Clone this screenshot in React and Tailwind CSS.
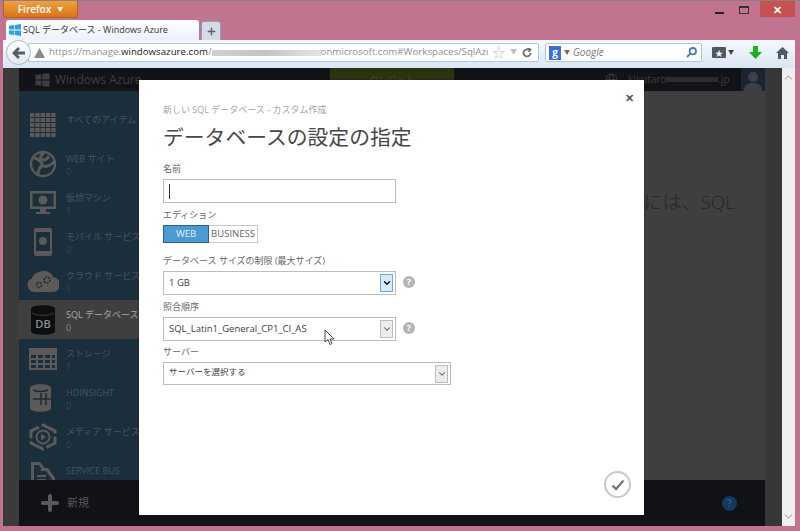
import { ChevronDown, ChevronUp, Plus } from "lucide-react";

const font = { fontFamily: '"Open Sans", "Noto Sans CJK JP", sans-serif' };

function GridIcon() {
  return (
    <svg width="26" height="24" viewBox="0 0 26 24" fill="#5c5a58">
      {[0, 5.3, 10.6, 15.9, 21.2].map((x) =>
        [0, 5, 10, 15, 20].map((y) => <rect key={x + "-" + y} x={x} y={y} width="4.4" height="4" />)
      )}
    </svg>
  );
}

function GlobeIcon() {
  return (
    <svg width="28" height="28" viewBox="0 0 28 28" fill="none" stroke="#5c5a58">
      <circle cx="14" cy="14" r="12" strokeWidth="2.4" />
      <path d="M5 8c5 1 7 3 8 6s4 3 8 1 4-4 4-4M9 24c0-5 3-8 5-10M15 3c-3 2-4 4-3 6s6 1 8-3" strokeWidth="3" />
    </svg>
  );
}

function MonitorIcon() {
  return (
    <svg width="26" height="24" viewBox="0 0 26 24" fill="#5c5a58">
      <path d="M0 0h26v18H0zM2.5 2.5v13h21v-13z" fillRule="evenodd" />
      <circle cx="13" cy="9" r="4.5" />
      <path d="M10 18h6v3h4v2H6v-2h4z" />
    </svg>
  );
}

function PhoneIcon() {
  return (
    <svg width="18" height="28" viewBox="0 0 18 28" fill="#5c5a58">
      <path d="M2 0h14a2 2 0 0 1 2 2v24a2 2 0 0 1-2 2H2a2 2 0 0 1-2-2V2a2 2 0 0 1 2-2zM2 4v19h14V4z" fillRule="evenodd" />
      <circle cx="9" cy="13" r="4" />
    </svg>
  );
}

function CloudIcon() {
  return (
    <svg width="32" height="24" viewBox="0 0 32 24" fill="#5c5a58">
      <path d="M7 23a7 7 0 0 1-2-13.500A8 8 0 0 1 13 3a9 9 0 0 1 13 5 7.500 7.500 0 0 1-1 15z" />
      <circle cx="12" cy="16" r="2.500" fill="none" stroke="#1b2e3c" strokeWidth="1.500" strokeDasharray="2 1" />
      <circle cx="20" cy="11" r="3" fill="none" stroke="#1b2e3c" strokeWidth="1.500" strokeDasharray="2 1" />
    </svg>
  );
}

function DbIcon() {
  return (
    <svg width="24" height="30" viewBox="0 0 24 30">
      <path d="M0 4c0-5 24-5 24 0v22c0 5-24 5-24 0z" fill="#0c0d0f" />
      <path d="M1 8c4 3 18 3 22 0" stroke="#3f3f3f" fill="none" />
      <text x="12" y="23" textAnchor="middle" fontSize="11" fontWeight="600" fill="#8d8d8d" style={font}>DB</text>
    </svg>
  );
}

function TableIcon() {
  return (
    <svg width="28" height="22" viewBox="0 0 28 22" fill="#5c5a58">
      <path d="M0 0h28v22H0zM2 7v3h5V7zm7 0v3h5V7zm7 0v3h5V7zm7 0v3h3V7zM2 12v3h5v-3zm7 0v3h5v-3zm7 0v3h5v-3zm7 0v3h3v-3zM2 17v3h5v-3zm7 0v3h5v-3zm7 0v3h5v-3zm7 0v3h3v-3z" fillRule="evenodd" />
    </svg>
  );
}

function HdIcon() {
  return (
    <svg width="26" height="28" viewBox="0 0 26 28" fill="#5c5a58">
      <path d="M0 4c0-5 21-5 21 0v20c0 5-21 5-21 0z" />
      <path d="M3 15h22M11 9v12M16 9v12M3 6c4 2 11 2 15 0" stroke="#1b2e3c" strokeWidth="1.600" fill="none" />
    </svg>
  );
}

function MediaIcon() {
  return (
    <svg width="28" height="28" viewBox="0 0 28 28" fill="none" stroke="#5c5a58">
      <path d="M14 2 26 8v12l-12 6L2 20V8z" strokeWidth="3" strokeDasharray="16 3" />
      <circle cx="14" cy="14" r="6.500" strokeWidth="2" />
      <path d="M12 10.500v7l5-3.500z" fill="#5c5a58" stroke="none" />
    </svg>
  );
}

function BusIcon() {
  return (
    <svg width="24" height="28" viewBox="0 0 24 28" fill="#5c5a58">
      <path d="M0 0h9l5 6h3l7 10v12H0zM3 3v22h18V17l-6-8H10V6L8 3z" fillRule="evenodd" />
      <path d="M6 13h9v2H6zM6 17h9v2H6z" />
    </svg>
  );
}

const navItems = [
  { label: "すべてのアイテム", icon: <GridIcon /> },
  { label: "WEB サイト", count: "0", icon: <GlobeIcon /> },
  { label: "仮想マシン", count: "1", icon: <MonitorIcon /> },
  { label: "モバイル サービス", count: "0", icon: <PhoneIcon /> },
  { label: "クラウド サービス", count: "1", icon: <CloudIcon /> },
  { label: "SQL データベース", count: "0", icon: <DbIcon />, active: true },
  { label: "ストレージ", count: "1", icon: <TableIcon /> },
  { label: "HDINSIGHT", count: "0", icon: <HdIcon /> },
  { label: "メディア サービス", count: "0", icon: <MediaIcon /> },
  { label: "SERVICE BUS", icon: <BusIcon /> },
];

function NavItem({ item }) {
  return (
    <div className={"flex h-[39px] shrink-0 items-center overflow-hidden " + (item.active ? "bg-[#3f3f3f]" : "")}>
      <div className="flex w-[47px] shrink-0 justify-center">{item.icon}</div>
      <div className="whitespace-nowrap pt-[2px] text-[9px] leading-[13px]">
        <div className={item.active ? "text-[#a9a9a9]" : "text-[#47545f]"}>{item.label}</div>
        <div className={item.active ? "text-[#8a8a8a]" : "text-[#34495a]"}>{item.count || "\u00a0"}</div>
      </div>
    </div>
  );
}

function Label({ children }) {
  return <div className="text-[9px] leading-[14px] text-[#666]">{children}</div>;
}

function Help() {
  return (
    <div className="mb-[2px] flex h-[12px] w-[12px] items-center justify-center rounded-full bg-[#b5b5b5] text-[9px] font-bold text-white">?</div>
  );
}

function Select({ value, width, active, small }) {
  return (
    <div className={"flex items-center justify-between border border-[#bdbdbd] bg-white pl-[5px] pr-[2px] " + width + " " + (small ? "h-[23px]" : "h-[24px]")}>
      <span className={"text-[#3c3c3c] " + (small ? "pb-[3px] text-[8.500px]" : "text-[9.500px]")}>{value}</span>
      <span className={"flex h-[18px] w-[13px] items-center justify-center border " + (active ? "border-[#6fa8d6] bg-[#d8ebfa]" : "border-[#bdbdbd] bg-[#ececec]")}>
        <ChevronDown size={10} strokeWidth={active ? 3.5 : 2.5} color={active ? "#111" : "#555"} />
      </span>
    </div>
  );
}

function Modal() {
  return (
    <div className="absolute left-[139px] top-[80px] flex h-[435px] w-[505px] flex-col bg-white pl-[24px] shadow-[0_0_2px_rgba(0,0,0,0.4)]">
      <span className="absolute right-[10px] top-[11px] text-[11px] font-bold leading-[13px] text-[#555]">✕</span>
      <div className="mt-[24px] text-[9px] leading-[12px] text-[#a5a5a5]">新しい SQL データベース - カスタム作成</div>
      <h1 className="mt-[7px] text-[20.800px] leading-[29px] text-[#474747]">データベースの設定の指定</h1>
      <div className="mt-[10px]"><Label>名前</Label></div>
      <div className="mt-[3px] flex h-[24px] w-[233px] items-center border border-[#bdbdbd] pl-[5px]">
        <div className="h-[15px] w-px bg-[#333]" />
      </div>
      <div className="mt-[5px]"><Label>エディション</Label></div>
      <div className="mt-[3px] flex h-[18px] w-[95px] text-[9.500px]">
        <div className="flex w-[46px] items-center justify-center border border-[#2d5f86] bg-[#4a9ad4] text-[#e8f2f9]">WEB</div>
        <div className="flex flex-1 items-center justify-center border border-l-0 border-[#c9c9c9] text-[#666]">BUSINESS</div>
      </div>
      <div className="mt-[11px]"><Label>データベース サイズの制限 (最大サイズ)</Label></div>
      <div className="mt-[3px] flex items-center gap-[7px]">
        <Select value="1 GB" width="w-[233px]" active />
        <Help />
      </div>
      <div className="mt-[5px]"><Label>照合順序</Label></div>
      <div className="mt-[3px] flex items-center gap-[7px]">
        <Select value="SQL_Latin1_General_CP1_CI_AS" width="w-[233px]" />
        <Help />
      </div>
      <div className="mt-[4px]"><Label>サーバー</Label></div>
      <div className="mt-[3px]">
        <Select value="サーバーを選択する" width="w-[288px]" small />
      </div>
      <div className="mt-auto mb-[17px] mr-[13px] flex justify-end">
        <div className="flex h-[27px] w-[27px] items-center justify-center rounded-full border-2 border-[#c8c8c8]">
          <svg width="14" height="12" viewBox="0 0 14 12" fill="none" stroke="#777" strokeWidth="2.400">
            <path d="M1.500 6.500 5 10l7.500-8.500" />
          </svg>
        </div>
      </div>
      {/* mouse pointer over the collation select */}
      <svg className="absolute left-[185px] top-[249px]" width="11" height="17" viewBox="0 0 11 17" fill="white" stroke="#333" strokeWidth="0.900">
        <path d="M1 1v12l3-2.500 2 5 2-1-2-4.500h4z" />
      </svg>
    </div>
  );
}

function BrowserChrome() {
  return (
    <>
      {/* title row */}
      <div className="flex h-[20px] shrink-0 items-start border-t border-[#8f7f85] pl-[3px] pr-[5px]">
        <div className="flex h-[17px] w-[75px] items-center justify-center gap-[6px] rounded-b-[3px] border border-t-0 border-[#b5651a] bg-gradient-to-b from-[#f0a03c] to-[#d9741c] text-[10px] font-semibold text-white">
          Firefox <span className="text-[6px]">▼</span>
        </div>
        <div className="ml-auto flex items-start">
          <div className="mr-[15px] mt-[11px] h-[2px] w-[9px] bg-[#222]" />
          <div className="mr-[11px] mt-[5px] h-[8px] w-[10px] border border-t-2 border-[#333]" />
          <div className="flex h-[16px] w-[35px] items-center justify-center bg-[#c75050] text-[11px] font-bold leading-none text-white">✕</div>
        </div>
      </div>
      {/* tab row */}
      <div className="flex h-[20px] shrink-0 items-end pl-[6px]">
        <div className="flex h-[20px] w-[193px] items-center gap-[2px] rounded-t-[3px] bg-gradient-to-b from-white to-[#eaf2fa] pl-[3px] text-[9px] text-[#333]">
          <svg width="12" height="12" viewBox="0 0 12 12" fill="#2aa3e0"><path d="M0 1.800 5 1v4.600H0zM5.700.9 12 0v5.600H5.700zM0 6.400h5V11l-5-.8zM5.700 6.400H12V12l-6.300-.9z" /></svg>
          SQL データベース - Windows Azure
        </div>
        <div className="ml-[2px] flex h-[19px] w-[20px] items-center justify-center rounded-t-[3px] border border-b-0 border-[#8fa0b5] bg-[#d3dbe6]">
          <Plus size={11} strokeWidth={3} color="#55606c" />
        </div>
      </div>
      {/* nav toolbar */}
      <div className="ml-[3px] mr-[5px] flex h-[28px] shrink-0 items-center bg-gradient-to-b from-[#f5f9fd] to-[#d9e6f3] pb-[3px] pr-[6px]">
        <div className="z-10 flex h-[25px] w-[25px] shrink-0 translate-x-[3px] items-center justify-center rounded-full border border-[#a9bacb] bg-gradient-to-b from-white to-[#e3eaf2]">
          <svg width="13" height="12" viewBox="0 0 13 12" fill="#55606c"><path d="M6 0 8 2 5.500 4.500H13v3H5.500L8 10l-2 2-6-6z" /></svg>
        </div>
        <div className="flex h-[19px] w-[511px] shrink-0 items-center overflow-hidden whitespace-nowrap rounded-r-[2px] border border-[#b4c6d9] bg-white pl-[5px] pr-[6px] text-[9.700px]">
          <svg className="shrink-0" width="11" height="10" viewBox="0 0 11 10" fill="#8a8a8a"><path d="M5.500 0 11 10H0z" /></svg>
          <span className="ml-[4px] text-[#8a8f95]">https://manage.</span>
          <span className="text-[#222]">windowsazure.com</span>
          <span className="text-[#8a8f95]">/</span>
          <span className="h-[6px] w-[109px] shrink-0 bg-gradient-to-r from-[#d0d0d0] via-[#c4c4c4] to-[#e4e4e4]" />
          <span className="text-[#8a8f95]">onmicrosoft.com#Workspaces/SqlAzı</span>
          <div className="ml-auto flex shrink-0 items-center gap-[5px] text-[#b9bfc5]">
            <span className="text-[13px] leading-none">☆</span>
            <span className="text-[7px]">▼</span>
            <svg width="10" height="10" viewBox="0 0 10 10" fill="none" stroke="#66707a" strokeWidth="1.800"><path d="M8.500 5A3.500 3.500 0 1 1 6.500 1.800M5.500 0l3 1.500-2 2.500" /></svg>
          </div>
        </div>
        <div className="ml-[6px] flex h-[19px] w-[157px] shrink-0 items-center rounded-[2px] border border-[#b4c6d9] bg-white pl-[3px] pr-[4px]">
          <span className="flex h-[14px] w-[12px] items-center justify-center bg-[#3b6fd8] text-[10px] font-bold text-white">g</span>
          <span className="ml-[3px] text-[6px] text-[#666]">▼</span>
          <span className="ml-[3px] text-[10px] italic text-[#777]">Google</span>
          <svg className="ml-auto" width="11" height="11" viewBox="0 0 11 11" fill="none" stroke="#3f7fc0" strokeWidth="1.800"><circle cx="6.800" cy="4.200" r="3.200" /><path d="M4.500 6.500 1 10" /></svg>
        </div>
        <div className="ml-[10px] flex h-[11px] w-[14px] items-center justify-center rounded-[1px] bg-[#4f5963] text-[8px] leading-none text-white">★</div>
        <span className="ml-[2px] text-[6px] text-[#444]">▼</span>
        <svg className="ml-[15px]" width="13" height="13" viewBox="0 0 13 13" fill="#1cb31c"><path d="M4 0h5v6h4l-6.500 7L0 6h4z" /></svg>
        <svg className="ml-[14px]" width="13" height="12" viewBox="0 0 13 12" fill="#4f5963"><path d="M6.500 0 13 6h-2v6H8V8H5v4H2V6H0z" /></svg>
      </div>
    </>
  );
}

function PortalPage() {
  return (
    <div className="ml-[3px] mr-[5px] flex min-h-0 flex-1">
      <div className="w-[16px] shrink-0 bg-[#3b3b3b]" />
      <div className="flex w-[746px] shrink-0 flex-col">
        <div className="flex h-[23px] shrink-0 items-center bg-[#121316]">
          <svg className="ml-[16px] shrink-0" width="15" height="14" viewBox="0 0 12 12" fill="#3c3f42"><path d="M0 1.800 5 1v4.600H0zM5.700.9 12 0v5.600H5.700zM0 6.400h5V11l-5-.8zM5.700 6.400H12V12l-6.300-.9z" /></svg>
          <span className="ml-[5px] w-[85px] shrink-0 whitespace-nowrap text-[12px] text-[#3c3f42]">Windows Azure</span>
          <div className="ml-[190px] flex h-full w-[124px] shrink-0 items-center justify-center bg-[#2c3311] text-[9px] text-[#474d2c]">クレジット</div>
          <svg className="ml-[151px] shrink-0" width="13" height="13" viewBox="0 0 13 13" fill="none" stroke="#3c3f42"><circle cx="6.500" cy="6.500" r="5.500" /><path d="M1 6.500h11M6.500 1c-3 3-3 8 0 11M6.500 1c3 3 3 8 0 11" /></svg>
          <span className="ml-[10px] text-[10px] text-[#3c3f42]">kikutaro</span>
          <span className="h-[5px] w-[52px] bg-[#2b2d30]" />
          <span className="text-[10px] text-[#3c3f42]">.jp</span>
          <div className="ml-auto flex h-full w-[24px] items-end justify-center bg-[#1c2430]">
            <svg width="18" height="20" viewBox="0 0 18 20" fill="#3a4048"><circle cx="9" cy="6" r="5" /><path d="M0 20c0-6 4-8 9-8s9 2 9 8z" /></svg>
          </div>
        </div>
        <div className="flex min-h-0 flex-1">
          <div className="flex w-[121px] shrink-0 flex-col overflow-hidden bg-[#1b2e3c] pt-[14px]">
            {navItems.map((item) => <NavItem key={item.label} item={item} />)}
          </div>
          <div className="flex flex-1 justify-end bg-[#3f3f3f] pr-[30px] pt-[97px] text-[19px] font-light leading-[28px] text-[#262626]">
            には、SQL
          </div>
        </div>
        <div className="flex h-[46px] shrink-0 items-center bg-[#111215]">
          <Plus className="ml-[19px]" size={24} strokeWidth={4} color="#5a5a5a" />
          <span className="ml-[5px] text-[11px] text-[#565656]">新規</span>
          <div className="ml-auto mr-[28px] flex h-[15px] w-[15px] items-center justify-center rounded-full bg-[#123a5c] text-[10px] font-bold text-[#2c5a80]">?</div>
        </div>
      </div>
      <div className="w-[17px] shrink-0 bg-[#373737]" />
      <div className="flex w-[13px] shrink-0 flex-col justify-between bg-[#efefef] py-[3px] text-[#b5b5b5]">
        <ChevronUp size={13} />
        <ChevronDown size={13} />
      </div>
    </div>
  );
}

export default function App() {
  return (
    <div className="relative flex h-[531px] w-[800px] flex-col overflow-hidden bg-[#c1748f] pb-[5px]" style={font}>
      <BrowserChrome />
      <PortalPage />
      <Modal />
    </div>
  );
}
